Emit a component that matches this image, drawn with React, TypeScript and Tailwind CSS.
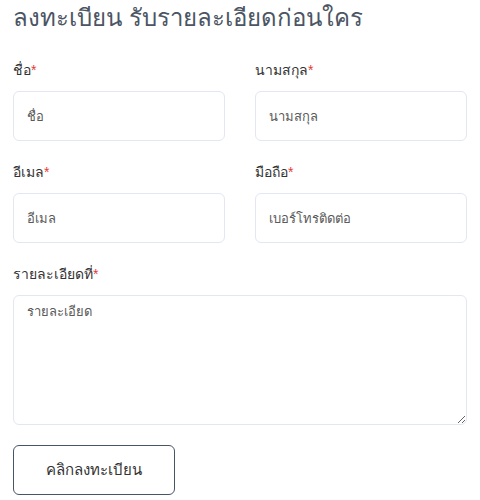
import React from 'react';

const Label: React.FC<{ text: string }> = ({ text }) => (
  <label className="block text-[14px] leading-5 text-[#333]">
    {text}
    <span className="text-[#e53935]">*</span>
  </label>
);

const inputCls =
  'w-full h-[50px] rounded-md border border-[#e4e6f2] bg-white px-[13px] text-[13px] text-[#444] placeholder:text-[#5a5a5a] outline-none';

const App: React.FC = () => {
  return (
    <div className="w-[480px] h-[500px] bg-white px-[13px] pt-[2px] font-['Liberation_Sans',sans-serif] overflow-hidden">
      <h1 className="text-[24px] leading-8 text-[#4b5563]">ลงทะเบียน รับรายละเอียดก่อนใคร</h1>

      <div className="mt-[26px] grid grid-cols-2 gap-x-[30px] gap-y-[21px]">
        <div className="flex flex-col gap-[11px]">
          <Label text="ชื่อ" />
          <input className={inputCls} placeholder="ชื่อ" />
        </div>
        <div className="flex flex-col gap-[11px]">
          <Label text="นามสกุล" />
          <input className={inputCls} placeholder="นามสกุล" />
        </div>
        <div className="flex flex-col gap-[11px]">
          <Label text="อีเมล" />
          <input className={inputCls} placeholder="อีเมล" />
        </div>
        <div className="flex flex-col gap-[11px]">
          <Label text="มือถือ" />
          <input className={inputCls} placeholder="เบอร์โทรติดต่อ" />
        </div>
        <div className="col-span-2 flex flex-col gap-[11px]">
          <Label text="รายละเอียดที่" />
          <textarea
            className="w-full h-[130px] rounded-md border border-[#e4e6f2] bg-white px-[13px] py-[6px] text-[13px] text-[#444] placeholder:text-[#5a5a5a] outline-none"
            placeholder="รายละเอียด"
          />
        </div>
      </div>

      <button className="mt-[20px] h-[50px] w-[162px] rounded-md border border-[#475569] bg-white text-[15px] text-[#333]">
        คลิกลงทะเบียน
      </button>
    </div>
  );
};

export default App;
